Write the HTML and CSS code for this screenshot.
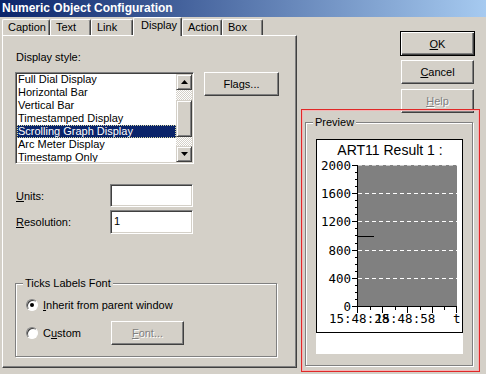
FILE: index.html
```html
<!DOCTYPE html>
<html lang="en">
<head>
    <meta charset="utf-8"/>
    <title>Numeric Object Configuration</title>
    <link rel="stylesheet" href="styles.css">
</head>
<body>
    <div class="titlebar">Numeric Object Configuration</div>
    <div class="main">
        <div class="left">
            <div class="tabs">
                <div class="tab tab-caption">Caption</div>
                <div class="tab tab-text">Text</div>
                <div class="tab tab-link">Link</div>
                <div class="tab tab-display active">Display</div>
                <div class="tab tab-action">Action</div>
                <div class="tab tab-box">Box</div>
            </div>
            <div class="panel">
                <div class="label">Display style:</div>
                <div class="style-row">
                    <div class="listbox">
                        <div class="items">
                            <div class="item">Full Dial Display</div>
                            <div class="item">Horizontal Bar</div>
                            <div class="item">Vertical Bar</div>
                            <div class="item">Timestamped Display</div>
                            <div class="item selected">Scrolling Graph Display</div>
                            <div class="item">Arc Meter Display</div>
                            <div class="item">Timestamp Only</div>
                        </div>
                        <div class="scrollbar">
                            <div class="sb-btn"><svg width="7" height="4" viewBox="0 0 7 4"><path d="M3.5 0L7 4H0z" fill="#000"/></svg></div>
                            <div class="sb-track sb-top"></div>
                            <div class="sb-thumb"></div>
                            <div class="sb-track sb-rest"></div>
                            <div class="sb-btn"><svg width="7" height="4" viewBox="0 0 7 4"><path d="M0 0H7L3.5 4z" fill="#000"/></svg></div>
                        </div>
                    </div>
                    <div class="button flags">Flags...</div>
                </div>
                <div class="field units">
                    <div class="field-label"><u>U</u>nits:</div>
                    <div class="edit"></div>
                </div>
                <div class="field resolution">
                    <div class="field-label"><u>R</u>esolution:</div>
                    <div class="edit">1</div>
                </div>
                <div class="group ticks">
                    <div class="group-title">Ticks Labels Font</div>
                    <div class="radio-row first">
                        <span class="radio checked"></span>
                        <span><u>I</u>nherit from parent window</span>
                    </div>
                    <div class="radio-row second">
                        <span class="radio-label"><span class="radio"></span><span>C<u>u</u>stom</span></span>
                        <div class="button disabled font-btn"><u>F</u>ont...</div>
                    </div>
                </div>
            </div>
        </div>
        <div class="right">
            <div class="button ok"><u>O</u>K</div>
            <div class="button cancel"><u>C</u>ancel</div>
            <div class="button disabled help"><u>H</u>elp</div>
            <div class="group preview">
                <div class="group-title">Preview</div>
                <div class="chart-box">
                    <svg class="chart" width="147" height="194" viewBox="0 0 147 194">
                        <rect x="0.5" y="0.5" width="146" height="193" fill="#fff" stroke="#000"/>
                        <text class="chart-title" x="74" y="16" text-anchor="middle">ART11 Result 1 :</text>
                        <rect x="42" y="26" width="99" height="142" fill="#808080"/>
                        <path d="M42 26.5H141" stroke="#c8c8c8" stroke-dasharray="4 3"/>
                        <path d="M42 54.5H141M42 82.5H141M42 111.5H141M42 139.5H141" stroke="#fff" stroke-dasharray="4 3"/>
                        <path d="M42 97.5H58" stroke="#000"/>
                        <path d="M41.5 26V168M41 167.5H141" stroke="#000"/>
                        <path d="M36 26.5H42M36 54.5H42M36 82.5H42M36 111.5H42M36 139.5H42M36 167.5H42" stroke="#000"/>
                        <path d="M39 33.5H42M39 40.5H42M39 47.5H42M39 61.5H42M39 68.5H42M39 75.5H42M39 89.5H42M39 96.5H42M39 104.5H42M39 118.5H42M39 125.5H42M39 132.5H42M39 146.5H42M39 153.5H42M39 160.5H42" stroke="#000"/>
                        <path d="M41.5 168V174M66.5 168V174M91.5 168V174M116.5 168V174M140.5 168V174" stroke="#000"/>
                        <path d="M54.5 168V171M79.5 168V171M104.5 168V171M128.5 168V171" stroke="#000"/>
                        <g class="axis-label" text-anchor="end">
                            <text x="35" y="30.5">2000</text>
                            <text x="35" y="59">1600</text>
                            <text x="35" y="87">1200</text>
                            <text x="35" y="115.5">800</text>
                            <text x="35" y="143.5">400</text>
                            <text x="35" y="171.5">0</text>
                        </g>
                        <g class="axis-label">
                            <text x="13" y="183.5">15:48:28</text>
                            <text x="59" y="183.5">15:48:58</text>
                            <text x="137" y="183.5">t</text>
                        </g>
                    </svg>
                </div>
            </div>
        </div>
    </div>
    <div class="highlight"></div>
</body>
</html>
```

FILE: styles.css
```css
body {
    margin: 0;
    width: 486px;
    height: 374px;
    overflow: hidden;
    background: #d4d0c8;
    font-family: 'Liberation Sans', Arial, sans-serif;
    font-size: 11px;
    color: #000;
}

.titlebar {
    height: 17px;
    line-height: 16px;
    padding-left: 2px;
    background: linear-gradient(to right, #0a246a, #a6caf0);
    color: #fff;
    font-weight: bold;
    font-size: 12px;
}

.main {
    display: flex;
    height: 357px;
}

.left {
    width: 297px;
    padding-left: 2px;
    box-sizing: border-box;
}

/* tabs */
.tabs {
    display: flex;
    align-items: flex-end;
    height: 18px;
}

.tab {
    height: 16px;
    box-sizing: border-box;
    border-top: 1px solid #fff;
    border-left: 1px solid #fff;
    border-right: 1px solid #404040;
    border-radius: 2px 2px 0 0;
    box-shadow: inset -1px 0 #808080;
    padding-left: 5px;
    line-height: 15px;
    white-space: nowrap;
}

.tab-caption { width: 48px; }
.tab-text { width: 41px; }
.tab-link { width: 42px; }
.tab-display { width: 49px; }
.tab-action { width: 40px; }
.tab-box { width: 41px; }

.tab.active {
    height: 19px;
    margin-bottom: -1px;
    padding-left: 7px;
    background: #d4d0c8;
    position: relative;
    z-index: 1;
}

.panel {
    width: 295px;
    height: 333px;
    box-sizing: border-box;
    border: 1px solid;
    border-color: #fff #404040 #404040 #fff;
    box-shadow: inset -1px -1px #808080;
    padding: 15px 0 0 12px;
}

.label {
    line-height: 13px;
    padding-left: 1px;
}

.style-row {
    display: flex;
    align-items: flex-start;
    margin-top: 8px;
}

/* list box */
.listbox {
    width: 179px;
    height: 92px;
    box-sizing: border-box;
    display: flex;
    background: #fff;
    border: 1px solid;
    border-color: #808080 #fff #fff #808080;
    box-shadow: inset 1px 1px #404040, inset -1px -1px #d4d0c8;
    padding: 1px;
}

.items {
    flex: 1;
    overflow: hidden;
}

.item {
    line-height: 13px;
    padding-left: 1px;
    white-space: nowrap;
}

.item:first-child {
    margin-top: -1px;
}

.item.selected {
    background: #0a246a;
    color: #fff;
    outline: 1px dotted #d8d8a0;
    outline-offset: -1px;
}

.scrollbar {
    width: 16px;
    display: flex;
    flex-direction: column;
}

.sb-btn,
.sb-thumb {
    box-sizing: border-box;
    background: #d4d0c8;
    border: 1px solid;
    border-color: #d4d0c8 #404040 #404040 #d4d0c8;
    box-shadow: inset 1px 1px #fff, inset -1px -1px #808080;
}

.sb-btn {
    height: 16px;
    display: flex;
    align-items: center;
    justify-content: center;
}

.sb-thumb {
    height: 37px;
}

.sb-track {
    background: repeating-conic-gradient(#fff 0 25%, #d4d0c8 0 50%) 0 0 / 2px 2px;
}

.sb-top { height: 10px; }
.sb-rest { flex: 1; }

/* buttons */
.button {
    box-sizing: border-box;
    background: #d4d0c8;
    border: 1px solid;
    border-color: #fff #404040 #404040 #fff;
    box-shadow: inset -1px -1px #808080;
    display: flex;
    align-items: center;
    justify-content: center;
}

.button.disabled {
    color: #808080;
    text-shadow: 1px 1px #fff;
}

.flags {
    width: 75px;
    height: 24px;
    margin-left: 10px;
}

/* edits */
.field {
    display: flex;
    align-items: center;
}

.units { margin-top: 20px; }
.resolution { margin-top: 3px; }

.field-label {
    width: 95px;
    padding-left: 1px;
    box-sizing: border-box;
}

.edit {
    width: 83px;
    height: 23px;
    box-sizing: border-box;
    background: #fff;
    border: 1px solid;
    border-color: #808080 #fff #fff #808080;
    box-shadow: inset 1px 1px #404040, inset -1px -1px #d4d0c8;
    padding: 4px 0 0 3px;
    line-height: 13px;
}

.resolution .edit {
    height: 24px;
}

/* group boxes */
.group {
    box-sizing: border-box;
    border: 1px solid #808080;
    box-shadow: inset 1px 1px #fff, 1px 1px #fff;
    padding-left: 10px;
}

.group-title {
    width: fit-content;
    margin: -7px 0 0 -3px;
    padding: 0 2px;
    background: #d4d0c8;
    line-height: 13px;
}

.ticks {
    width: 262px;
    height: 74px;
    margin-top: 49px;
}

.radio-row {
    display: flex;
    align-items: center;
}

.radio-row.first {
    margin-top: 7px;
    height: 16px;
}

.radio-row.second {
    margin-top: 8px;
    height: 24px;
}

.radio-label {
    display: flex;
    align-items: center;
    width: 85px;
}

.radio {
    width: 12px;
    height: 12px;
    box-sizing: border-box;
    margin-right: 5px;
    border-radius: 50%;
    background: #fff;
    border: 1px solid;
    border-color: #808080 #fff #fff #808080;
    box-shadow: inset 1px 1px #404040;
    display: flex;
    align-items: center;
    justify-content: center;
}

.radio.checked::after {
    content: "";
    width: 4px;
    height: 4px;
    border-radius: 50%;
    background: #000;
}

.font-btn {
    width: 73px;
    height: 24px;
}

/* right column */
.right {
    width: 189px;
    padding-top: 14px;
}

.ok {
    width: 75px;
    height: 25px;
    margin-left: 103px;
    border: 1px solid #000;
    box-shadow: inset 1px 1px #fff, inset -1px -1px #404040, inset -2px -2px #808080;
}

.cancel,
.help {
    width: 73px;
    height: 24px;
    margin-left: 104px;
}

.cancel { margin-top: 4px; }
.help { margin-top: 5px; }

.preview {
    width: 168px;
    height: 244px;
    margin: 9px 0 0 8px;
}

.chart-box {
    width: 147px;
    height: 215px;
    margin-top: 10px;
    background: #fff;
}

.chart {
    display: block;
}

.chart-title {
    font-family: 'Liberation Sans', Arial, sans-serif;
    font-size: 14px;
}

.axis-label {
    font-family: 'DejaVu Sans Mono', monospace;
    font-size: 12.5px;
}

/* red annotation frame drawn over the dialog */
.highlight {
    position: absolute;
    left: 301px;
    top: 109px;
    width: 179px;
    height: 263px;
    box-sizing: border-box;
    border: 1px solid #e02828;
    box-shadow: inset 0 0 0 1px #f2b4b4;
    pointer-events: none;
}
```
